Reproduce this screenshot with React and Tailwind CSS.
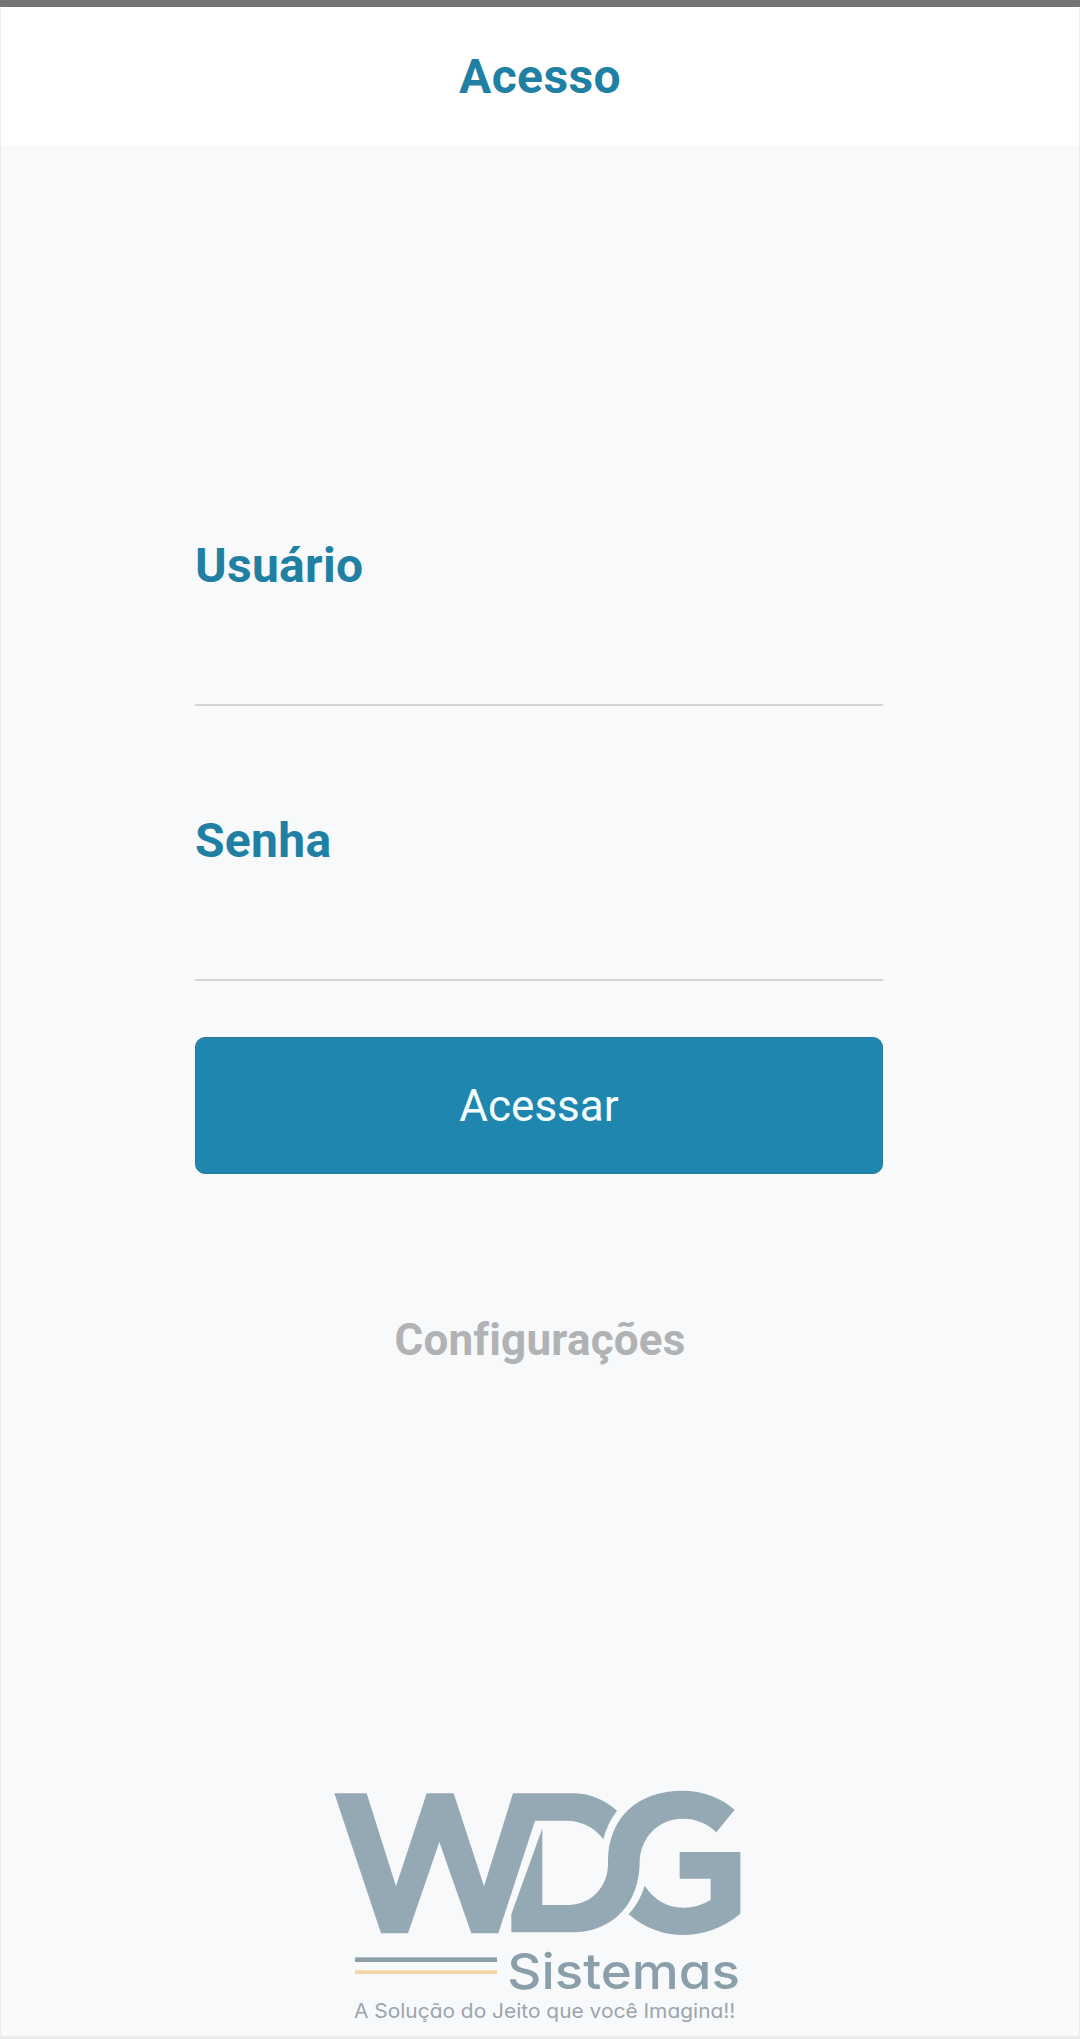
function Field({ label, type }) {
  return (
    <label className="flex h-[168px] w-full flex-col justify-between">
      <span className="text-[48px] leading-[56px] font-bold tracking-[0.3px] text-[#1f80a3]">{label}</span>
      <input type={type} className="h-[80px] w-full border-b-2 border-[#d3d5d7] bg-transparent text-[40px] outline-none" />
    </label>
  );
}

function BrandLogo() {
  return (
    <svg className="block h-[249px] w-[420px] [font-feature-settings:'cv11']" viewBox="30 50 1260 747" role="img" aria-label="WDG Sistemas">
      <g fill="#95a9b4">
        <path d="M43 69H140L228 348L320 69H401L492 348L579 69H765Q833 71 891 121Q862 158 850 207Q808 151 738 151H645L535 489H454L358 215L264 489H183Z" />
        <path d="M667 174V404H750C815 401 862 350 864 285V270C866 140 955 61 1087 61Q1178 62 1244 118L1189 186Q1148 145 1087 145C1015 145 960 203 959 275C958 395 885 481 765 486H574V432Z" />
        <path d="M1079 245H1261V430Q1184 494 1085 494Q995 492 926 432Q961 392 974 346Q1017 411 1090 412Q1135 412 1172 389V325H1079Z" />
      </g>
      <rect x="105" y="561" width="426" height="14" fill="#8b9faa" />
      <rect x="105" y="600" width="426" height="11" fill="#f4d5a4" />
      <text x="562" y="657" textLength="698" lengthAdjust="spacingAndGlyphs" fontSize="149" fontWeight="500" fontFamily="Inter, sans-serif" fill="#8b9faa">Sistemas</text>
      <text x="102" y="742" textLength="1144" lengthAdjust="spacingAndGlyphs" fontSize="59" fontFamily="Inter, sans-serif" fill="#9aa5ae">A Solução do Jeito que você Imagina!!</text>
    </svg>
  );
}

export default function App() {
  return (
    <div className="flex h-[2039px] w-[1080px] flex-col overflow-hidden border-b-3 border-[#ebebec] bg-[#f8f9fb] font-[Roboto,sans-serif]">
      <div className="h-[7px] shrink-0 bg-[#757374]" />
      <header className="flex h-[139px] shrink-0 items-center justify-center border-x border-[#ececed] bg-white">
        <h1 className="text-[48px] leading-[56px] font-bold tracking-[0.4px] text-[#1f80a3]">Acesso</h1>
      </header>
      <main className="flex flex-1 flex-col items-center border-x border-[#ececed] pt-[392px]">
        <form className="mr-[2px] flex w-[688px] flex-col gap-[107px]">
          <Field label="Usuário" type="text" />
          <div className="flex flex-col gap-[56px]">
            <Field label="Senha" type="password" />
            <button type="button" className="h-[137px] w-full rounded-[10px] border border-[#2a7895] bg-[#1f87af] text-[44px] text-[#f4fdff]">
              Acessar
            </button>
          </div>
        </form>
        <a href="#" className="mt-[140px] text-[44px] leading-[52px] font-bold tracking-[0.2px] text-[#b0b2b4] [font-variant-ligatures:none]">Configurações</a>
        <div className="mt-auto">
          <BrandLogo />
        </div>
      </main>
    </div>
  );
}
